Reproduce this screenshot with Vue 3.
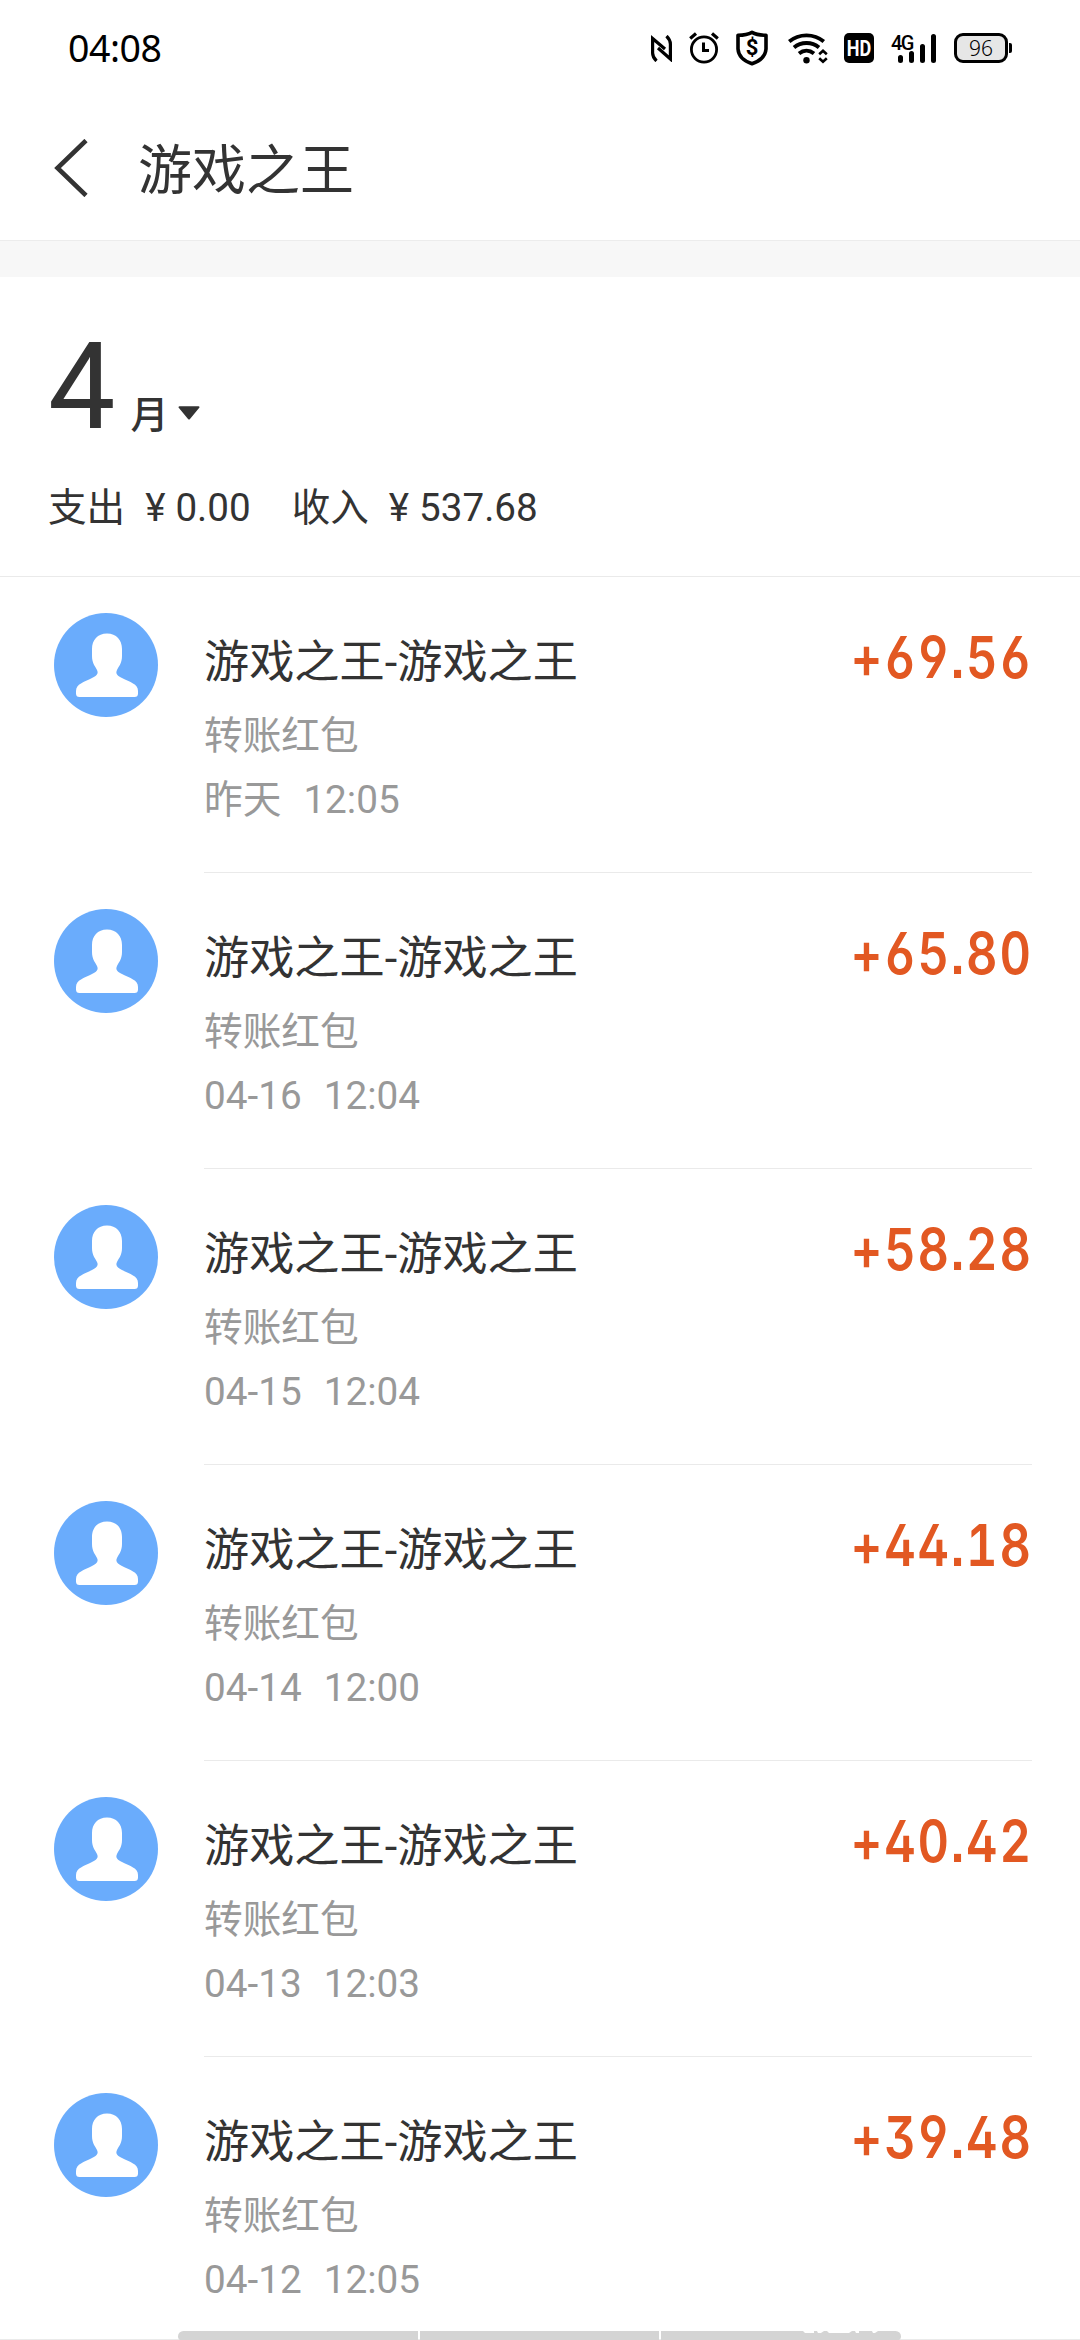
<script setup>
const records = [
  { id: 1, amount: '+69.56', day: '昨天', time: '12:05' },
  { id: 2, amount: '+65.80', day: '04-16', time: '12:04' },
  { id: 3, amount: '+58.28', day: '04-15', time: '12:04' },
  { id: 4, amount: '+44.18', day: '04-14', time: '12:00' },
  { id: 5, amount: '+40.42', day: '04-13', time: '12:03' },
  { id: 6, amount: '+39.48', day: '04-12', time: '12:05' },
]
</script>

<template>
  <div class="screen">
    <div class="status">
      <span class="clock">04:08</span>
      <div class="icons">
        <svg class="nfc" width="21" height="27" viewBox="0 0 21 27" fill="none" stroke="#000" stroke-width="3.2">
          <path d="M5.500 26C3 23.500 1.600 21.500 1.600 18V3.500L14 14" />
          <path d="M15.500 1C18 3.500 19.400 5.500 19.400 9V24L7 13" />
        </svg>
        <svg class="alarm" width="30" height="32" viewBox="0 0 30 32" fill="none" stroke="#000" stroke-width="2.800">
          <circle cx="15" cy="17.500" r="12.600" />
          <path d="M14.500 10.500V18.500H20" stroke-width="3" />
          <path d="M1.200 6.500L7 1.500M28.800 6.500L23 1.500" stroke-width="3.200" />
        </svg>
        <div class="shield">
          <svg width="32" height="36" viewBox="0 0 32 36" fill="none" stroke="#000" stroke-width="3.600" stroke-linejoin="round">
            <path d="M16 2.300C12 4.500 7 5.200 2 5.300V19C2.500 27 8 31 16 33.700C24 31 29.500 27 30 19V5.300C25 5.200 20 4.500 16 2.300Z" />
          </svg>
          <span>$</span>
        </div>
        <svg class="wifi" width="41" height="31" viewBox="0 0 41 31" fill="none" stroke="#000" stroke-width="3.800">
          <path d="M1.200 8.500C11 0.200 26 0.200 35.800 8.500" />
          <path d="M6 14.500C13 8.500 24 8.500 31 14.500" />
          <path d="M11 20.500C15.500 16.800 21.500 16.800 26 20.500" />
          <circle cx="18.500" cy="27.300" r="3.200" fill="#000" stroke="none" />
          <path d="M31.200 21.200L35 17.700L38.800 21.200M31.200 25.300L35 28.800L38.800 25.300" stroke-width="2.600" />
        </svg>
        <div class="hd"><span>HD</span></div>
        <div class="signal">
          <span>4G</span>
          <svg width="46" height="32" viewBox="0 0 46 32" stroke="#000" stroke-width="5" stroke-linecap="round">
            <path d="M9.500 25.500V28.500M20.500 21.500V28.500M31.500 14.500V28.500M42.500 4.500V28.500" />
          </svg>
        </div>
        <div class="battery"><span>96</span><i></i></div>
      </div>
    </div>

    <header class="nav">
      <svg width="34" height="58" viewBox="0 0 34 58" fill="none" stroke="#333" stroke-width="4.600">
        <path d="M32 1.500L3.500 29L32 56.500" />
      </svg>
      <h1>游戏之王</h1>
    </header>
    <div class="gap"></div>

    <section class="summary">
      <div class="month">
        <span class="num">4</span>
        <span class="unit">月</span>
        <svg width="22" height="14" viewBox="0 0 22 14" fill="#333" stroke="#333" stroke-width="2" stroke-linejoin="round">
          <path d="M1.500 1.200H20.500L11 12.500Z" />
        </svg>
      </div>
      <div class="totals">
        <span>支出</span><b>¥</b><span class="out">0.00</span>
        <span>收入</span><b>¥</b><span>537.68</span>
      </div>
    </section>

    <ul class="list">
      <li v-for="r in records" :key="r.id">
        <svg class="avatar" width="104" height="104" viewBox="0 0 104 104">
          <circle cx="52" cy="52" r="52" fill="#6aacfc" />
          <path fill="#fff" d="M53 20.500C43.500 20.500 38 27 38 36V43C38 50 41 53 43 57C45 61 42 63 38 65C30 69 22 71 22 78V80.500Q22 84 25.500 84H80.500Q84 84 84 80.500V78C84 71 76 69 68 65C64 63 61 61 63 57C65 53 68 50 68 43V36C68 27 62.500 20.500 53 20.500Z" />
        </svg>
        <div class="body">
          <div class="text">
            <p class="name">游戏之王-游戏之王</p>
            <p class="kind">转账红包</p>
            <p class="date"><span>{{ r.day }}</span><span>{{ r.time }}</span></p>
          </div>
          <div class="amount">{{ r.amount }}</div>
        </div>
      </li>
    </ul>

    <div class="handle">
      <i></i><i></i>
      <i>
        <svg width="78" height="4" viewBox="0 0 78 4" fill="#fff">
          <path d="M0 0H11V2H2ZM14 0H21L18 2H15ZM24 0H49L46 2H26ZM52 0H56V2H53ZM69 0H75L72 2H70Z" />
        </svg>
      </i>
    </div>
  </div>
</template>

<style>
body {
  background: #fff;
  overflow: hidden;
}
</style>

<style scoped>
.screen {
  position: relative;
  width: 1080px;
  height: 2340px;
  overflow: hidden;
  background: #fff;
  color: #333;
  font-family: Roboto, "Noto Sans CJK SC", sans-serif;
}
.status {
  display: flex;
  justify-content: space-between;
  align-items: center;
  height: 96px;
  padding: 0 68px;
  color: #000;
}
.clock {
  margin-bottom: 2px;
  font: 37.500px "Noto Sans", sans-serif;
  letter-spacing: -0.500px;
}
.icons {
  display: flex;
  align-items: center;
}
.alarm { margin-left: 17px; }
.shield {
  display: grid;
  place-items: center;
  margin-left: 17px;
}
.shield > * { grid-area: 1 / 1; }
.shield span {
  font: bold 22px/24px Roboto, sans-serif;
}
.wifi { margin-left: 20px; }
.hd {
  display: flex;
  justify-content: center;
  width: 30px;
  height: 30px;
  margin-left: 15px;
  border-radius: 5px;
  background: #000;
  color: #fff;
  font: bold 22px/31px Roboto, sans-serif;
}
.hd span { transform: scaleX(0.820); }
.signal {
  display: grid;
  margin-left: 17px;
}
.signal > * { grid-area: 1 / 1; }
.signal span {
  margin-top: 1px;
  font: 500 20px/20px Roboto, sans-serif;
  letter-spacing: -1.500px;
}
.battery {
  display: flex;
  align-items: center;
  margin-left: 17px;
}
.battery span {
  box-sizing: border-box;
  width: 54px;
  height: 30px;
  border: 3px solid #000;
  border-radius: 9px;
  background: #e6e6e6;
  font: 350 21px/24px "Noto Sans", sans-serif;
  text-align: center;
}
.battery i {
  width: 3px;
  height: 10px;
  margin-left: 1px;
  border-radius: 0 2px 2px 0;
  background: #000;
}
.nav {
  display: flex;
  align-items: center;
  height: 144px;
  padding: 0 54px;
}
.nav h1 {
  margin: 8px 0 0 50px;
  font-size: 54px;
  font-weight: 400;
  line-height: 80px;
}
.gap {
  box-sizing: border-box;
  height: 37px;
  border-top: 1px solid #ececec;
  background: #f7f7f7;
}
.summary {
  box-sizing: border-box;
  height: 300px;
  padding: 40px 48px 0;
  border-bottom: 1px solid #eaeaea;
}
.month {
  display: flex;
  align-items: baseline;
  height: 141px;
}
.num {
  font-size: 120px;
  line-height: 141px;
}
.unit {
  margin-left: 15px;
  font-size: 38px;
  font-weight: 500;
}
.month svg {
  margin: 0 0 9px 10px;
  transform: translateY(-8px);
}
.totals {
  display: flex;
  margin-top: 22px;
  font-size: 38.600px;
  line-height: 56px;
}
.totals b {
  margin: 0 10px 0 20px;
  font-weight: 400;
}
.totals .out { margin-right: 41px; }
.list {
  margin: 0;
  padding: 0 48px 0 54px;
  list-style: none;
}
.list li {
  display: flex;
  height: 296px;
}
.avatar {
  flex: none;
  margin: 36px 46px 0 0;
}
.body {
  flex: 1;
  display: flex;
  justify-content: space-between;
  box-sizing: border-box;
  border-bottom: 1px solid #eaeaea;
}
.text p { margin: 0; }
.text .name {
  margin-top: 54px;
  font-size: 45.200px;
  line-height: 64px;
}
.kind, .date {
  color: #999;
  font-size: 38.700px;
}
.text .kind {
  margin-top: 13px;
  line-height: 56px;
}
.text .date {
  display: flex;
  gap: 22px;
  margin-top: 8px;
  line-height: 56px;
}
.amount {
  margin: 44px -1px 0 0;
  color: #e25822;
  font: 620 58px/72px Inter, Roboto, sans-serif;
  font-feature-settings: "ss01", "ss07", "cv03", "cv04", "tnum";
  letter-spacing: 2.300px;
  transform: scaleX(0.840);
  transform-origin: right;
}
.handle {
  position: absolute;
  left: 0;
  right: 0;
  bottom: 0;
  display: flex;
  gap: 2px;
  height: 9px;
  padding: 0 179px 0 178px;
  background: linear-gradient(#eaeaea, #eaeaea) bottom / 100% 1px no-repeat;
}
.handle i {
  flex: 1;
  display: flex;
  justify-content: flex-end;
  background: #d4d4d4;
}
.handle i:first-child { border-radius: 6px 0 0 4px; }
.handle i:last-child { border-radius: 0 6px 4px 0; }
.handle svg { margin-right: 20px; }
</style>
